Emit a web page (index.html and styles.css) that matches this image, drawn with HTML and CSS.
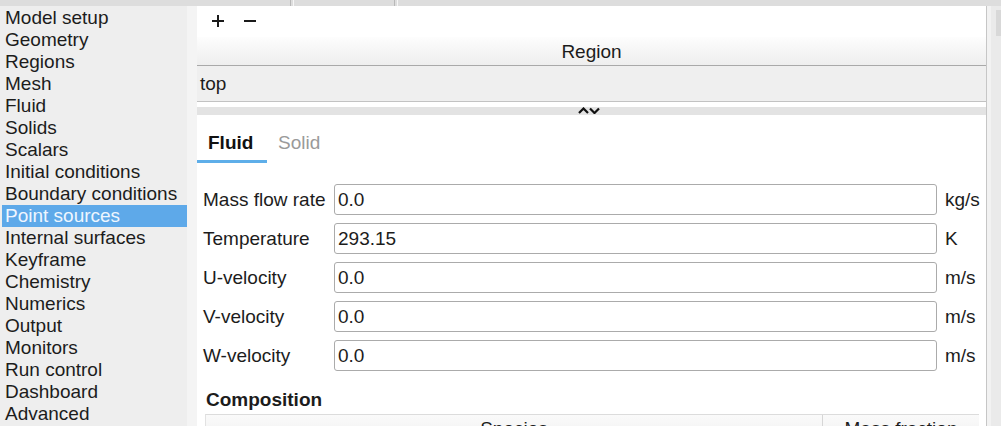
FILE: index.html
```html
<!DOCTYPE html>
<html>
<head>
<meta charset="utf-8">
<link rel="stylesheet" href="styles.css">
</head>
<body>
<div class="topstrip">
  <div class="ttab t1"></div>
  <div class="ttab t2"></div>
  <div class="ttab t3"></div>
</div>
<div class="app">
  <ul class="nav">
    <li>Model setup</li>
    <li>Geometry</li>
    <li>Regions</li>
    <li>Mesh</li>
    <li>Fluid</li>
    <li>Solids</li>
    <li>Scalars</li>
    <li>Initial conditions</li>
    <li>Boundary conditions</li>
    <li class="sel">Point sources</li>
    <li>Internal surfaces</li>
    <li>Keyframe</li>
    <li>Chemistry</li>
    <li>Numerics</li>
    <li>Output</li>
    <li>Monitors</li>
    <li>Run control</li>
    <li>Dashboard</li>
    <li>Advanced</li>
  </ul>
  <div class="gutter"></div>
  <div class="main">
    <div class="toolbar">
      <svg class="tbtn" width="14" height="14" viewBox="0 0 14 14"><path d="M7 1V13M1 7H13" stroke="#1a1a1a" stroke-width="2"/></svg>
      <svg class="tbtn" width="14" height="14" viewBox="0 0 14 14"><path d="M1 7H13" stroke="#1a1a1a" stroke-width="2"/></svg>
    </div>
    <div class="thead">Region</div>
    <div class="trow">top</div>
    <div class="splitter">
      <svg width="24" height="7" viewBox="0 0 24 7"><path d="M1 6L5.5 1.5L10 6" fill="none" stroke="#111" stroke-width="2.2"/><path d="M12 1.5L16.5 6L21 1.5" fill="none" stroke="#111" stroke-width="2.2"/></svg>
    </div>
    <div class="tabs">
      <div class="tab active">Fluid</div>
      <div class="tab">Solid</div>
    </div>
    <div class="form">
      <label>Mass flow rate</label><div class="inp">0.0</div><span class="unit">kg/s</span>
      <label>Temperature</label><div class="inp">293.15</div><span class="unit">K</span>
      <label>U-velocity</label><div class="inp">0.0</div><span class="unit">m/s</span>
      <label>V-velocity</label><div class="inp">0.0</div><span class="unit">m/s</span>
      <label>W-velocity</label><div class="inp">0.0</div><span class="unit">m/s</span>
    </div>
    <div class="comp">Composition</div>
    <div class="ctable">
      <div class="ch species">Species</div>
      <div class="ch mass">Mass fraction</div>
    </div>
  </div>
  <div class="vscroll"><div class="thumb"></div></div>
</div>
</body>
</html>
```

FILE: styles.css
```css
html, body {
  margin: 0;
  padding: 0;
}
body {
  width: 1001px;
  height: 426px;
  overflow: hidden;
  background: #eeeeee;
  font-family: "Liberation Sans", Arial, sans-serif;
  font-size: 19px;
  color: #1c1c1c;
}
.topstrip {
  height: 6px;
  background: #dddddd;
  display: flex;
}
.ttab {
  height: 6px;
}
.t1 { width: 290px; border-right: 1px solid #b8b8b8; }
.t2 { width: 100px; margin-left: 2px; border-left: 1px solid #f6f6f6; border-right: 1px solid #b8b8b8; }
.t3 { flex: 1; margin-left: 2px; border-left: 1px solid #f6f6f6; }
.app {
  display: flex;
  height: 420px;
  overflow: hidden;
}
.nav {
  list-style: none;
  margin: 0;
  padding: 1px 0 0 0;
  width: 187px;
  background: #eeeeee;
}
.nav li {
  height: 22px;
  line-height: 22px;
  padding-left: 5px;
  white-space: nowrap;
}
.nav li.sel {
  background: #5ea9e9;
  color: #eef6ff;
  margin-left: 2px;
  padding-left: 3px;
}
.gutter {
  width: 10px;
  background: #f4f4f4;
}
.main {
  width: 789px;
  background: #ffffff;
  border-right: 1px solid #c6c6c6;
  display: flex;
  flex-direction: column;
  overflow: hidden;
}
.main > * {
  flex-shrink: 0;
}
.toolbar {
  height: 31px;
  display: flex;
  align-items: center;
  gap: 18px;
  padding-left: 14px;
}
.tbtn {
  display: block;
  margin-top: -2px;
}
.thead {
  height: 28px;
  line-height: 30px;
  text-align: center;
  background: linear-gradient(#fdfdfd, #eeeeee);
  border-bottom: 1px solid #a9a9a9;
}
.trow {
  height: 35px;
  line-height: 36px;
  padding-left: 3px;
  background: #efefef;
  border-bottom: 1px solid #c2c2c2;
}
.splitter {
  margin-top: 5px;
  height: 8px;
  background: #e3e3e3;
  display: flex;
  justify-content: center;
  align-items: flex-start;
}
.splitter svg {
  display: block;
  margin-left: -4px;
}
.tabs {
  display: flex;
  padding-top: 10px;
}
.tab {
  height: 35px;
  line-height: 35px;
  padding: 0 11px;
  color: #9a9a9a;
  border-bottom: 3px solid transparent;
}
.tab.active {
  font-weight: bold;
  color: #111111;
  border-bottom-color: #5eaee9;
  width: 48px;
}
.form {
  display: grid;
  grid-template-columns: 123px 603px auto;
  grid-auto-rows: 31px;
  row-gap: 8px;
  column-gap: 8px;
  padding: 21px 0 0 6px;
  align-items: center;
}
.form label {
  white-space: nowrap;
}
.inp {
  box-sizing: border-box;
  height: 31px;
  line-height: 29px;
  border: 1px solid #ababab;
  border-radius: 3px;
  padding-left: 3px;
  background: #ffffff;
}
.unit {
  white-space: nowrap;
}
.comp {
  font-weight: bold;
  margin: 18px 0 0 9px;
  height: 25px;
  line-height: 22px;
}
.ctable {
  margin-left: 8px;
  width: 773px;
  display: flex;
  border-top: 1px solid #dcdcdc;
  border-left: 1px solid #e2e2e2;
}
.ch {
  height: 28px;
  line-height: 28px;
  text-align: center;
  background: linear-gradient(#fafafa, #f0f0f0);
}
.species {
  width: 616px;
  border-right: 1px solid #d6d6d6;
}
.mass {
  flex: 1;
}
.vscroll {
  flex: 1;
  background: #eaeaea;
  border-left: 4px solid #f2f2f2;
  position: relative;
}
.thumb {
  position: absolute;
  top: 4px;
  right: 0;
  width: 5px;
  height: 26px;
  background: #d8d8d8;
}
```
